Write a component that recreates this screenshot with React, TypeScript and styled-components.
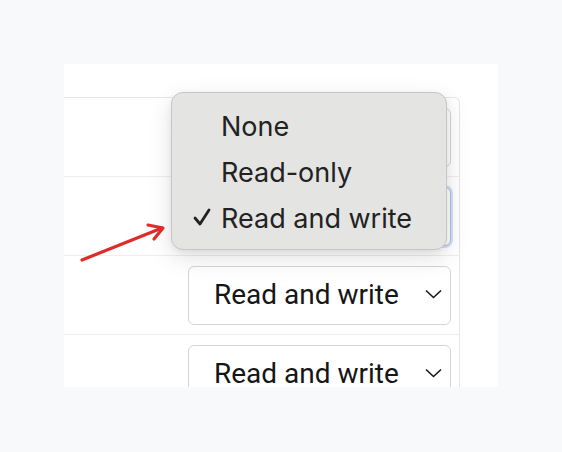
import React from "react";
import styled, { createGlobalStyle } from "styled-components";

const Global = createGlobalStyle`
  html, body { margin: 0; padding: 0; background: #f8f9fb; }
  body { width: 562px; height: 452px; overflow: hidden; }
`;

const Stage = styled.div`
  position: relative;
  width: 562px;
  height: 452px;
  padding: 64px 0 0 64px;
  box-sizing: border-box;
`;

const Card = styled.div`
  width: 434px;
  height: 323px;
  background: #ffffff;
  overflow: hidden;
  padding-top: 33px;
  box-sizing: border-box;
`;

const Table = styled.div`
  width: 396px;
  border-top: 1px solid #e6e6ea;
  border-right: 1px solid #e6e6ea;
  border-top-right-radius: 6px;
  box-sizing: border-box;
  display: flex;
  flex-direction: column;
`;

const Row = styled.div`
  height: 79px;
  border-bottom: 1px solid #eeeef1;
  box-sizing: border-box;
  display: flex;
  justify-content: flex-end;
  align-items: flex-start;
  padding: 10px 8px 0 0;
`;

const Select = styled.div<{ $focused?: boolean }>`
  width: 263px;
  height: 59px;
  box-sizing: border-box;
  border: 1px solid ${(p) => (p.$focused ? "#a9c0e6" : "#d2d5da")};
  box-shadow: ${(p) => (p.$focused ? "0 0 0 2px #d5e2f7" : "none")};
  border-radius: 6px;
  background: #fff;
  display: flex;
  align-items: center;
  justify-content: space-between;
  padding: 0 8px 2px 25px;
  font-family: Roboto, "Noto Sans", sans-serif;
  font-size: 28px;
  color: #161616;
`;

const Chevron = styled.svg`
  width: 17px;
  height: 10px;
  margin-bottom: 2px;
`;

const Menu = styled.div`
  position: absolute;
  left: 171px;
  top: 92px;
  width: 276px;
  height: 158px;
  box-sizing: border-box;
  background: #e4e4e2;
  border: 1px solid #c6c6c6;
  border-radius: 12px;
  box-shadow: 0 8px 24px rgba(0, 0, 0, 0.12), 0 2px 6px rgba(0, 0, 0, 0.06);
  padding-top: 10px;
  display: flex;
  flex-direction: column;
  font-family: Inter, "Noto Sans", sans-serif;
  font-size: 27px;
  color: #222;
`;

const Item = styled.div`
  height: 46px;
  display: flex;
  align-items: center;
  position: relative;
  padding-left: 49px;
`;

const Check = styled.svg`
  position: absolute;
  left: 21px;
  top: 13px;
  width: 18px;
  height: 18px;
`;

const Arrow = styled.svg`
  position: absolute;
  left: 76px;
  top: 220px;
  width: 92px;
  height: 46px;
`;

const ChevronIcon = () => (
  <Chevron viewBox="0 0 17 10">
    <path d="M1 1.5 L8.5 8.5 L16 1.5" fill="none" stroke="#161616" strokeWidth="1.6" />
  </Chevron>
);

const options = ["None", "Read-only", "Read and write"];

export default function App() {
  return (
    <>
      <Global />
      <Stage>
        <Card>
          <Table>
            <Row>
              <Select>
                <span>Read and write</span>
                <ChevronIcon />
              </Select>
            </Row>
            <Row>
              <Select $focused>
                <span>Read and write</span>
                <ChevronIcon />
              </Select>
            </Row>
            <Row>
              <Select>
                <span>Read and write</span>
                <ChevronIcon />
              </Select>
            </Row>
            <Row>
              <Select>
                <span>Read and write</span>
                <ChevronIcon />
              </Select>
            </Row>
          </Table>
        </Card>
        <Menu>
          {options.map((o, i) => (
            <Item key={o}>
              {i === 2 && (
                <Check viewBox="0 0 18 18">
                  <path d="M2 10 L7 16 L16 2" fill="none" stroke="#222" strokeWidth="2.8" strokeLinecap="round" strokeLinejoin="round" />
                </Check>
              )}
              {o}
            </Item>
          ))}
        </Menu>
        <Arrow viewBox="0 0 92 46">
          <path d="M6 40 L86 8" stroke="#e02b2b" strokeWidth="3.2" strokeLinecap="round" fill="none" />
          <path d="M72 5 L87 8 L78 19" stroke="#e02b2b" strokeWidth="3.2" strokeLinecap="round" strokeLinejoin="round" fill="none" />
        </Arrow>
      </Stage>
    </>
  );
}
